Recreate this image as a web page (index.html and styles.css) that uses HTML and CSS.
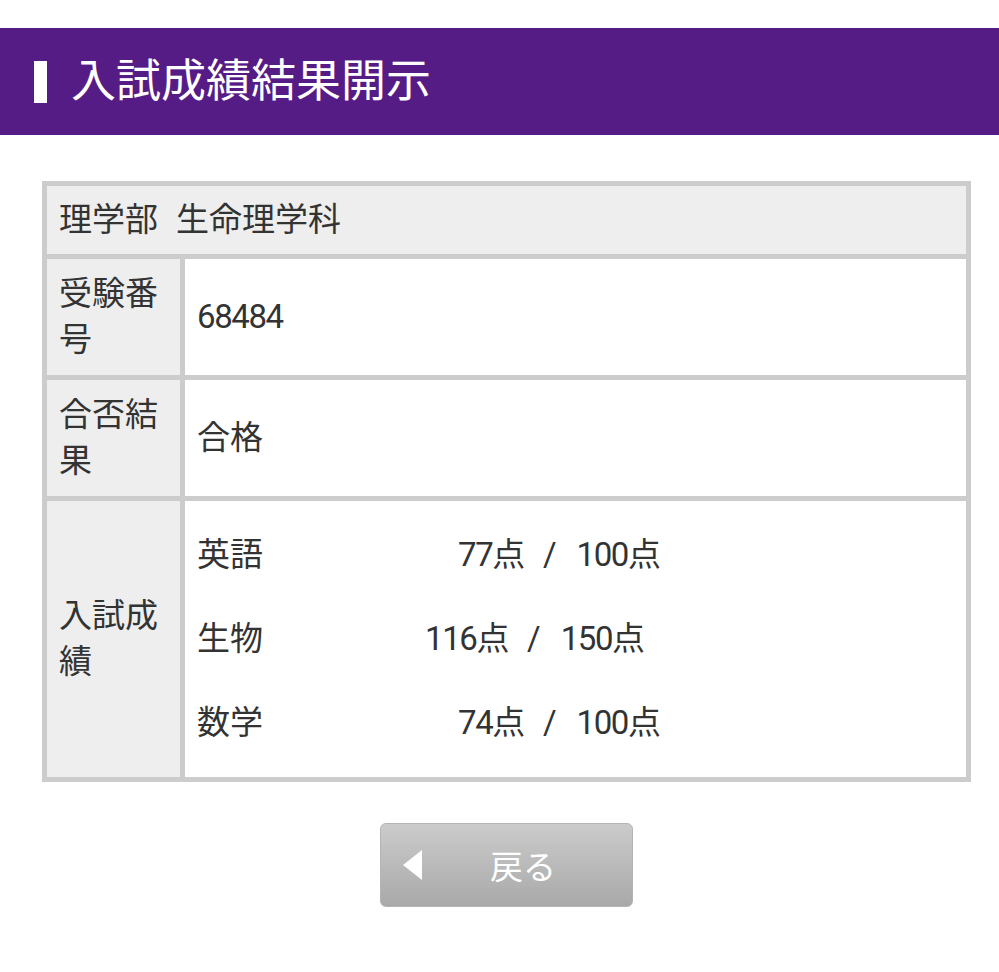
FILE: index.html
```html
<!DOCTYPE html>
<html lang="ja">
<head>
  <meta charset="UTF-8" />
  <meta name="viewport" content="width=device-width, initial-scale=1.0" />
  <title>入試成績結果開示</title>
  <link rel="stylesheet" href="styles.css">
</head>
<body>
  <div class="page-title">
    <span class="marker"></span>
    <h1>入試成績結果開示</h1>
  </div>

  <div class="content">
    <table class="result">
      <tr>
        <th colspan="2" class="faculty">理学部<span class="dept">生命理学科</span></th>
      </tr>
      <tr>
        <th class="label">受験番号</th>
        <td class="num">68484</td>
      </tr>
      <tr>
        <th class="label">合否結果</th>
        <td>合格</td>
      </tr>
      <tr>
        <th class="label">入試成績</th>
        <td class="scores">
          <div class="score-line">
            <span class="subject">英語</span>
            <span class="num">77点</span><span class="sep">/</span><span class="num">100点</span>
          </div>
          <div class="score-line long">
            <span class="subject">生物</span>
            <span class="num">116点</span><span class="sep">/</span><span class="num">150点</span>
          </div>
          <div class="score-line">
            <span class="subject">数学</span>
            <span class="num">74点</span><span class="sep">/</span><span class="num">100点</span>
          </div>
        </td>
      </tr>
    </table>

    <div class="actions">
      <button class="back-btn"><span class="arrow"></span><span class="back-label">戻る</span></button>
    </div>
  </div>
</body>
</html>
```
FILE: styles.css
```css
body {
  font-family: Roboto, "Noto Sans CJK JP", sans-serif;
  margin: 0;
  background: #fff;
  color: #333;
}
.page-title {
  margin-top: 28px;
  height: 107px;
  background: #561c86;
  display: flex;
  align-items: center;
  padding-left: 34px;
}
.marker {
  width: 13px;
  height: 42px;
  background: #fff;
  margin-right: 24px;
}
.page-title h1 {
  margin: 0;
  font-size: 45px;
  font-weight: normal;
  color: #fff;
  line-height: 1;
}
.content {
  padding: 46px 28px 40px 42px;
}
.result {
  width: 100%;
  border-spacing: 5px;
  background: #cccccc;
}
.result th,
.result td {
  font-size: 33px;
  font-weight: normal;
  line-height: 46px;
  padding: 12px 12px;
  text-align: left;
  vertical-align: middle;
}
.result th {
  background: #eeeeee;
}
.result td {
  background: #fff;
}
.result .faculty {
  padding-top: 11px;
  padding-bottom: 11px;
}
.dept {
  margin-left: 18px;
}
.label {
  width: 109px;
}
.num {
  letter-spacing: -1.4px;
}
.sep {
  margin: 0 20px 0 19px;
}
.score-line {
  display: flex;
  height: 84px;
  align-items: center;
}
.subject {
  width: 261px;
}
.score-line.long .subject {
  width: 228px;
}
.actions {
  margin-top: 41px;
  display: flex;
  justify-content: center;
}
.back-btn {
  display: flex;
  align-items: center;
  width: 253px;
  height: 84px;
  padding: 0 0 0 22px;
  border: 1px solid #b4b4b4;
  border-radius: 6px;
  background: linear-gradient(#cbcbcb, #a9a9a9);
  font-family: inherit;
  cursor: pointer;
}
.arrow {
  width: 0;
  height: 0;
  border-top: 15px solid transparent;
  border-bottom: 15px solid transparent;
  border-right: 19px solid #fff;
}
.back-label {
  margin-left: 68px;
  font-size: 33px;
  color: #fff;
}
```
